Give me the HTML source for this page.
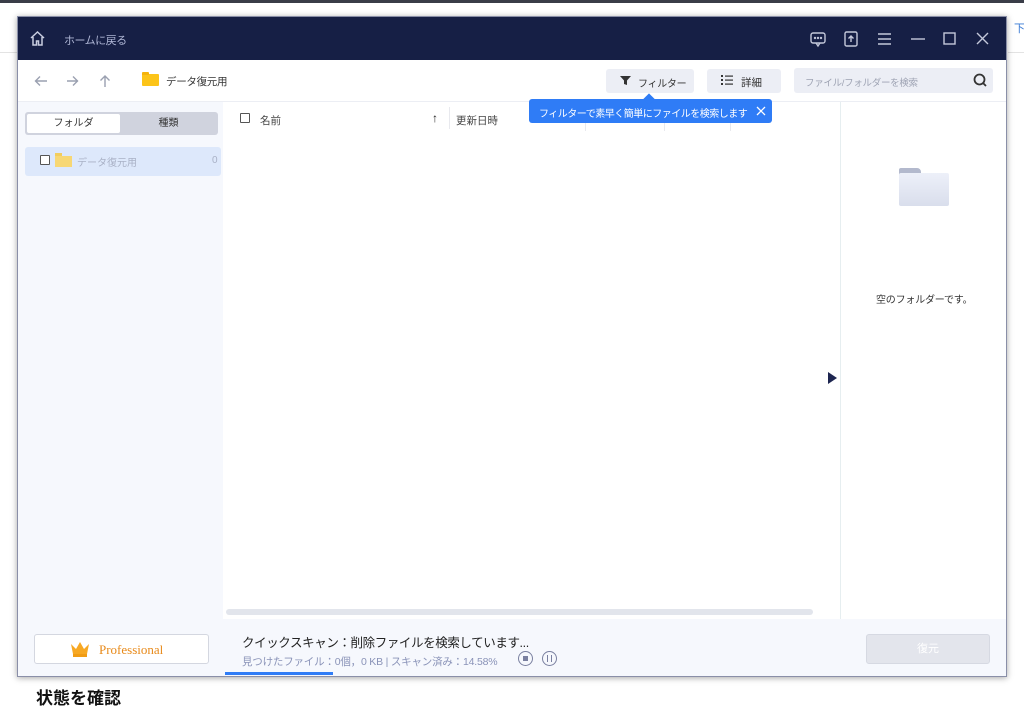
<!DOCTYPE html>
<html><head><meta charset="utf-8"><style>
*{box-sizing:border-box;margin:0;padding:0}
body{width:1024px;height:694px;overflow:hidden;background:#fff;position:relative;font-family:"Liberation Sans","Noto Sans CJK JP",sans-serif;font-size:11px;color:#333}
.a{position:absolute;white-space:nowrap}
</style></head><body>
<div class="a" style="left:0;top:0;width:1024px;height:3px;background:#3a3d48"></div>
<div class="a" style="left:1008px;top:52px;width:16px;height:1px;background:#e3e3e3"></div>
<div class="a" style="left:0;top:52px;width:17px;height:1px;background:#e3e3e3"></div>
<div class="a" style="left:1014px;top:20px;color:#3a7bd5;font-size:11px">下</div>
<div class="a" style="left:36px;top:684px;font-size:17px;font-weight:bold;color:#111">状態を確認</div>

<div class="a" style="left:17px;top:16px;width:990px;height:661px;background:#fff;box-shadow:0 1px 6px rgba(0,0,0,.35);border:1px solid #8a8fa8;overflow:hidden">
 <div class="a" style="left:0;top:0;width:990px;height:43px;background:#161f45"></div>
 <svg class="a" style="left:11px;top:13px" width="17" height="17" viewBox="0 0 17 17" fill="none" stroke="#c9cde0" stroke-width="1.5"><path d="M2 8L8.5 2 15 8M4 7v8h3.5v-4h2v4H13V7"/></svg>
 <div class="a" style="left:46px;top:15px;color:#aeb5d4;font-size:11px;letter-spacing:-0.5px">ホームに戻る</div>
 <svg class="a" style="left:790px;top:12px" width="190" height="20" viewBox="0 0 190 20" fill="none" stroke="#c4c8da" stroke-width="1.4">
  <rect x="3" y="4" width="14" height="10" rx="2"/><path d="M8 14l2 3 2-3"/><circle cx="7" cy="9" r=".5"/><circle cx="10" cy="9" r=".5"/><circle cx="13" cy="9" r=".5"/>
  <rect x="37" y="3" width="12" height="14" rx="1.5"/><path d="M43 13V7M40.5 9.5L43 7l2.5 2.5"/>
  <path d="M70 5h13M70 10h13M70 15h13"/>
  <path d="M103 10h14"/>
  <rect x="136" y="4" width="11" height="11"/>
  <path d="M169 4l11 11M180 4l-11 11"/>
 </svg>
 <div class="a" style="left:0;top:43px;width:990px;height:42px;border-bottom:1px solid #eceef4"></div>
 <svg class="a" style="left:15px;top:56px" width="85" height="16" viewBox="0 0 85 16" fill="none" stroke="#9aa0b0" stroke-width="1.4"><path d="M14 8H3M7 3.5L2.5 8 7 12.5"/><path d="M34 8h11M40 3.5L44.5 8 40 12.5"/><path d="M72 14V3M67.5 7.5L72 3l4.5 4.5"/></svg>
 <div class="a" style="left:124px;top:57px;width:17px;height:12px;background:#fcc419;border-radius:1px"></div>
 <div class="a" style="left:124px;top:55px;width:7px;height:3px;background:#f5b30c;border-radius:1px 1px 0 0"></div>
 <div class="a" style="left:148px;top:57px;font-size:10.5px;color:#333;letter-spacing:-0.3px">データ復元用</div>
 <div class="a" style="left:588px;top:52px;width:88px;height:24px;background:#eceef5;border-radius:3px"></div>
 <svg class="a" style="left:602px;top:58px" width="11" height="11" viewBox="0 0 11 11"><path d="M0 1h11L7 5.5V10L4 9V5.5z" fill="#333"/></svg>
 <div class="a" style="left:620px;top:58px;font-size:10px;letter-spacing:-0.3px">フィルター</div>
 <div class="a" style="left:689px;top:52px;width:74px;height:24px;background:#eceef5;border-radius:3px"></div>
 <svg class="a" style="left:703px;top:58px" width="12" height="10" viewBox="0 0 12 10" fill="#333"><rect x="0" y="0" width="2" height="2"/><rect x="0" y="4" width="2" height="2"/><rect x="0" y="8" width="2" height="2"/><rect x="4" y="0.5" width="8" height="1.2"/><rect x="4" y="4.5" width="8" height="1.2"/><rect x="4" y="8.5" width="8" height="1.2"/></svg>
 <div class="a" style="left:723px;top:58px;font-size:10.5px">詳細</div>
 <div class="a" style="left:776px;top:51px;width:199px;height:25px;background:#eceef5;border-radius:3px"></div>
 <div class="a" style="left:787px;top:58px;font-size:9.5px;color:#9ea3b3;letter-spacing:-0.3px">ファイル/フォルダーを検索</div>
 <svg class="a" style="left:955px;top:56px" width="14" height="14" viewBox="0 0 14 14" fill="none" stroke="#333" stroke-width="1.8"><circle cx="6.5" cy="6.5" r="5"/><path d="M10 10l3 3"/></svg>
 <div class="a" style="left:0;top:85px;width:205px;height:517px;background:#f6f8fd"></div>
 <div class="a" style="left:7px;top:95px;width:193px;height:23px;background:#d0d3de;border-radius:3px"></div>
 <div class="a" style="left:9px;top:97px;width:93px;height:19px;background:#fff;border-radius:2px;text-align:center;line-height:19px;font-size:10px">フォルダ</div>
 <div class="a" style="left:102px;top:97px;width:97px;height:19px;text-align:center;line-height:19px;font-size:10px">種類</div>
 <div class="a" style="left:7px;top:130px;width:196px;height:29px;background:#dde8fb;border-radius:3px"></div>
 <div class="a" style="left:22px;top:138px;width:10px;height:10px;border:1px solid #555;background:#fff;border-radius:1px"></div>
 <div class="a" style="left:37px;top:139px;width:17px;height:11px;background:#f7d774"></div>
 <div class="a" style="left:37px;top:136px;width:7px;height:3px;background:#f2cd5e"></div>
 <div class="a" style="left:59px;top:137px;font-size:10px;color:#a9b1c6">データ復元用</div>
 <div class="a" style="left:194px;top:138px;font-size:10px;color:#a9b1c6">0</div>
 <div class="a" style="left:205px;top:85px;width:618px;height:517px;background:#fff"></div>
 <div class="a" style="left:222px;top:96px;width:10px;height:10px;border:1px solid #555;border-radius:1px"></div>
 <div class="a" style="left:242px;top:96px;font-size:10.5px;color:#444">名前</div>
 <div class="a" style="left:414px;top:94px;font-size:12px;font-weight:bold;color:#222">↑</div>
 <div class="a" style="left:431px;top:90px;width:1px;height:22px;background:#e8e9ee"></div>
 <div class="a" style="left:438px;top:96px;font-size:10.5px;color:#444">更新日時</div>
 <div class="a" style="left:567px;top:100px;width:1px;height:14px;background:#e8e9ee"></div>
 <div class="a" style="left:646px;top:100px;width:1px;height:14px;background:#e8e9ee"></div>
 <div class="a" style="left:712px;top:100px;width:1px;height:14px;background:#e8e9ee"></div>
 <div class="a" style="left:511px;top:82px;width:243px;height:24px;background:#2f7cf6;border-radius:3px"></div>
 <div class="a" style="left:627px;top:78px;width:8px;height:8px;background:#2f7cf6;transform:rotate(45deg)"></div>
 <div class="a" style="left:521px;top:88px;font-size:10px;color:#fff;letter-spacing:-0.5px">フィルターで素早く簡単にファイルを検索します</div>
 <svg class="a" style="left:738px;top:89px" width="10" height="10" viewBox="0 0 10 10" stroke="#fff" stroke-width="1.3"><path d="M1 1l8 8M9 1L1 9"/></svg>
 <div class="a" style="left:208px;top:592px;width:587px;height:6px;background:#e2e5ec;border-radius:3px"></div>
 <div class="a" style="left:810px;top:355px;width:0;height:0;border-top:6px solid transparent;border-bottom:6px solid transparent;border-left:9px solid #1d2550"></div>
 <div class="a" style="left:822px;top:85px;width:1px;height:517px;background:#e6eef0"></div>
 <div class="a" style="left:881px;top:151px;width:22px;height:8px;background:#b3b9cd;border-radius:2px 4px 0 0"></div>
 <div class="a" style="left:881px;top:156px;width:50px;height:33px;background:linear-gradient(#edf0f9,#d9deec);border-radius:2px"></div>
 <div class="a" style="left:858px;top:274px;font-size:10px;color:#333;letter-spacing:-0.2px">空のフォルダーです。</div>
 <div class="a" style="left:0;top:602px;width:990px;height:59px;background:#f6f8fd"></div>
 <div class="a" style="left:16px;top:617px;width:175px;height:30px;background:#fff;border:1px solid #d4d7e0;border-radius:3px"></div>
 <svg class="a" style="left:52px;top:624px" width="20" height="16" viewBox="0 0 20 16"><path d="M1 3l5 5 4-7 4 7 5-5-2 10H3z" fill="#f7a823"/><rect x="3" y="13" width="14" height="3" fill="#f19c14"/></svg>
 <div class="a" style="left:81px;top:625px;font-size:13px;color:#e88a1a;font-family:'Liberation Serif',serif">Professional</div>
 <div class="a" style="left:224px;top:615px;font-size:12.5px;color:#222;letter-spacing:-0.4px">クイックスキャン：削除ファイルを検索しています...</div>
 <div class="a" style="left:224px;top:637px;font-size:10.5px;color:#8a93b8;letter-spacing:-0.2px">見つけたファイル：0個，0 KB | スキャン済み：14.58%</div>
 <div class="a" style="left:500px;top:634px;width:15px;height:15px;border:1.3px solid #7a80a0;border-radius:50%"></div>
 <div class="a" style="left:505px;top:639px;width:5px;height:5px;background:#7a80a0"></div>
 <div class="a" style="left:524px;top:634px;width:15px;height:15px;border:1.3px solid #7a80a0;border-radius:50%"></div>
 <div class="a" style="left:529px;top:638px;width:1.3px;height:7px;background:#7a80a0"></div>
 <div class="a" style="left:533px;top:638px;width:1.3px;height:7px;background:#7a80a0"></div>
 <div class="a" style="left:207px;top:655px;width:108px;height:3px;background:#2f7cf6"></div>
 <div class="a" style="left:848px;top:617px;width:124px;height:30px;background:#e3e5ec;border:1px solid #d6d9e2;border-radius:3px;text-align:center;line-height:28px;color:#fff;font-size:11px">復元</div>
</div>
</body></html>
